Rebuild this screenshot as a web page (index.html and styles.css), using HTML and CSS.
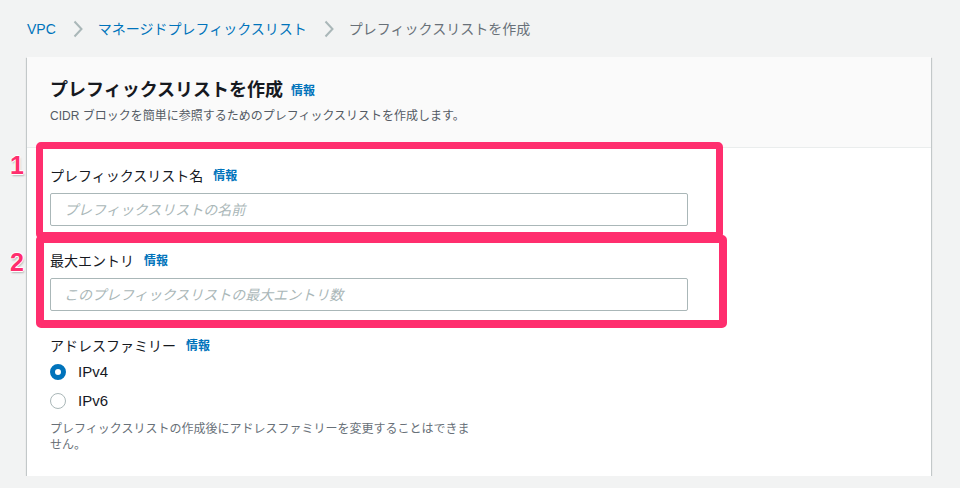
FILE: index.html
```html
<!DOCTYPE html>
<html>
<head>
  <title>プレフィックスリストを作成</title>
  <link rel="stylesheet" href="styles.css">
</head>
<body>
  <nav class="breadcrumbs">
    <a href="#">VPC</a>
    <svg class="chevron" width="10" height="18" viewBox="0 0 10 18"><path d="M1.5 1.5 L8.5 9 L1.5 16.5" fill="none" stroke="#aab7b8" stroke-width="2"/></svg>
    <a href="#">マネージドプレフィックスリスト</a>
    <svg class="chevron" width="10" height="18" viewBox="0 0 10 18"><path d="M1.5 1.5 L8.5 9 L1.5 16.5" fill="none" stroke="#aab7b8" stroke-width="2"/></svg>
    <span class="current">プレフィックスリストを作成</span>
  </nav>

  <div class="card">
    <div class="card-header">
      <h1>プレフィックスリストを作成 <a class="info" href="#">情報</a></h1>
      <p class="desc">CIDR ブロックを簡単に参照するためのプレフィックスリストを作成します。</p>
    </div>

    <div class="card-body">
      <div class="field">
        <label>プレフィックスリスト名 <a class="info" href="#">情報</a></label>
        <input type="text" placeholder="プレフィックスリストの名前" />
      </div>
      <div class="field">
        <label>最大エントリ <a class="info" href="#">情報</a></label>
        <input type="text" placeholder="このプレフィックスリストの最大エントリ数" />
      </div>
      <div class="field">
        <label>アドレスファミリー <a class="info" href="#">情報</a></label>
        <div class="radios">
          <div class="radio-row"><span class="radio checked"></span>IPv4</div>
          <div class="radio-row"><span class="radio"></span>IPv6</div>
        </div>
        <p class="help">プレフィックスリストの作成後にアドレスファミリーを変更することはできません。</p>
      </div>
    </div>

    <!-- annotation overlays -->
    <div class="mark mark-1"></div>
    <div class="mark mark-2"></div>
    <span class="num num-1">1</span>
    <span class="num num-2">2</span>
  </div>
</body>
</html>
```

FILE: styles.css
```css
body { margin: 0; background: #f2f3f3; font-family: "Liberation Sans", "Noto Sans CJK JP", sans-serif; color: #16191f; }
a { color: #0073bb; text-decoration: none; }

.breadcrumbs { display: flex; align-items: center; padding: 19px 27px 0; height: 20px; font-size: 14px; line-height: 20px; }
.chevron { margin: 0 15px 0 17px; }
.current { color: #687078; }

.card { position: relative; margin: 18px 29px 0 27px; background: #fff; box-shadow: 0 1px 1px 0 rgba(0,28,36,0.3), 1px 1px 1px 0 rgba(0,28,36,0.15), -1px 1px 1px 0 rgba(0,28,36,0.15); }
.card-header { background: #fafafa; border-bottom: 1px solid #eaeded; padding: 20px 23px 23px; }
h1 { margin: 0; font-size: 18px; line-height: 26px; font-weight: bold; }
h1 .info { margin-left: 3px; }
.info { font-size: 12px; font-weight: bold; vertical-align: 1px; }
.desc { margin: 4px 0 0; font-size: 12px; line-height: 16px; color: #545b64; }

.card-body { padding: 18px 23px 23px; }
.field { margin-bottom: 25px; }
.field:last-child { margin-bottom: 0; }
label { display: block; font-size: 14px; line-height: 20px; margin-bottom: 7px; }
label .info { margin-left: 6px; }
input { display: block; width: 638px; height: 33px; box-sizing: border-box; border: 1px solid #aab7b8; border-radius: 2px; padding: 0 13px; font-size: 14px; font-family: inherit; }
input::placeholder { color: #aab7b8; font-style: italic; }

.radios { margin-top: -6px; }
.radio-row { display: flex; align-items: center; height: 29px; font-size: 15px; }
.radio { width: 16px; height: 16px; box-sizing: border-box; border-radius: 50%; border: 1px solid #aab7b8; margin-right: 12px; }
.radio.checked { border: 5px solid #0073bb; }
.help { margin: 6px 0 0; width: 424px; font-size: 12px; line-height: 16px; color: #687078; }

.mark { position: absolute; box-sizing: border-box; border: 7px solid #ff2e6e; border-radius: 5px; }
.mark-1 { left: 9px; top: 85px; width: 687px; height: 97px; }
.mark-2 { left: 9px; top: 178px; width: 691px; height: 93px; border-width: 8px; }
.num { position: absolute; left: -17px; font-size: 25px; line-height: 30px; font-weight: bold; color: #ff2e6e; text-shadow: 1px 0 0 #fff, -1px 0 0 #fff, 0 1px 0 #fff, 0 -1px 0 #fff, 1px 2px 2px rgba(0,0,0,0.25); }
.num-1 { top: 93px; }
.num-2 { top: 190px; }
```
